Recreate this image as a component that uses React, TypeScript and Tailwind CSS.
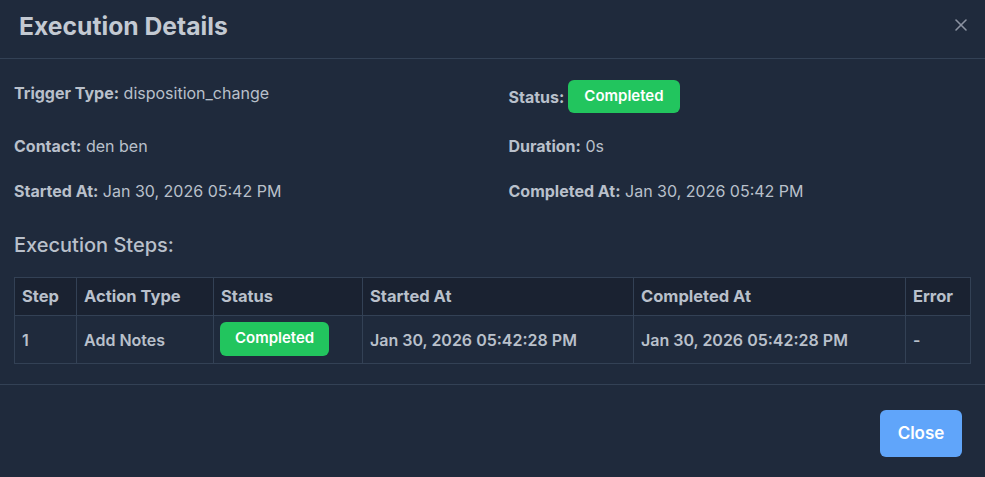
import { X } from 'lucide-react'

const Field = ({ label, value }: { label: string; value: React.ReactNode }) => (
  <div className="text-[16px] leading-6 text-[#b9c0cb]">
    <span className="font-bold">{label}</span> {value}
  </div>
)

const colW = ['w-[62px]', 'w-[137px]', 'w-[149px]', 'w-[271px]', 'w-[272px]', '']

export default function App() {
  const cols = ['Step', 'Action Type', 'Status', 'Started At', 'Completed At', 'Error']

  return (
    <div
      className="w-[985px] h-[477px] bg-[#1f2a3c] text-[#b9c0cb] flex flex-col"
      style={{ fontFamily: 'Inter, "Noto Sans", sans-serif' }}
    >
      <div className="h-[59px] flex items-center justify-between pl-[19px] pr-[14px] border-b border-[#334155] shrink-0">
        <h2 className="text-[24.7px] font-bold text-[#c3c9d2] -mt-1">Execution Details</h2>
        <X className="w-5 h-5 text-[#8b93a1] -mt-2" strokeWidth={1.9} />
      </div>

      <div className="px-[14px] pt-[21px] pb-[20px] border-b border-[#334155]">
        <div className="grid grid-cols-2 gap-x-8 gap-y-[21px]">
          <div className="pt-[1px]">
            <Field label="Trigger Type:" value="disposition_change" />
          </div>
          <div className="flex items-center gap-1 text-[16px] text-[#b9c0cb]">
            <span className="font-bold">Status:</span>
            <span className="inline-flex items-center rounded-md bg-[#22c55e] px-4 h-[33px] text-[15px] font-semibold text-white">
              Completed
            </span>
          </div>
          <Field label="Contact:" value="den ben" />
          <Field label="Duration:" value="0s" />
          <Field label="Started At:" value="Jan 30, 2026 05:42 PM" />
          <Field label="Completed At:" value="Jan 30, 2026 05:42 PM" />
        </div>

        <h3 className="mt-[27px] mb-[17px] text-[20px] font-medium text-[#b9c0cb]">Execution Steps:</h3>

        <table className="w-full border-collapse text-[16px] text-[#b9c0cb]">
          <thead>
            <tr className="bg-[#1a2231]">
              {cols.map((c, i) => (
                <th
                  key={c}
                  className={'border border-[#334155] h-[38px] px-[7px] text-left text-[16.5px] font-bold ' + colW[i]}
                >
                  {c}
                </th>
              ))}
            </tr>
          </thead>
          <tbody>
            <tr>
              <td className="border border-[#334155] h-[48px] px-[7px] font-semibold">1</td>
              <td className="border border-[#334155] px-[7px] font-semibold">Add Notes</td>
              <td className="border border-[#334155] px-[6px] pb-[2px]">
                <span className="inline-flex items-center rounded-md bg-[#22c55e] px-[15px] h-[34px] text-[15px] font-semibold text-white">
                  Completed
                </span>
              </td>
              <td className="border border-[#334155] px-[7px] font-semibold">Jan 30, 2026 05:42:28 PM</td>
              <td className="border border-[#334155] px-[7px] font-semibold">Jan 30, 2026 05:42:28 PM</td>
              <td className="border border-[#334155] px-[7px] font-semibold">-</td>
            </tr>
          </tbody>
        </table>
      </div>

      <div className="flex justify-end px-[23px] pt-[25px]">
        <button className="h-[47px] w-[82px] rounded-md bg-[#60a5fa] text-[17px] font-semibold text-white">
          Close
        </button>
      </div>
    </div>
  )
}
